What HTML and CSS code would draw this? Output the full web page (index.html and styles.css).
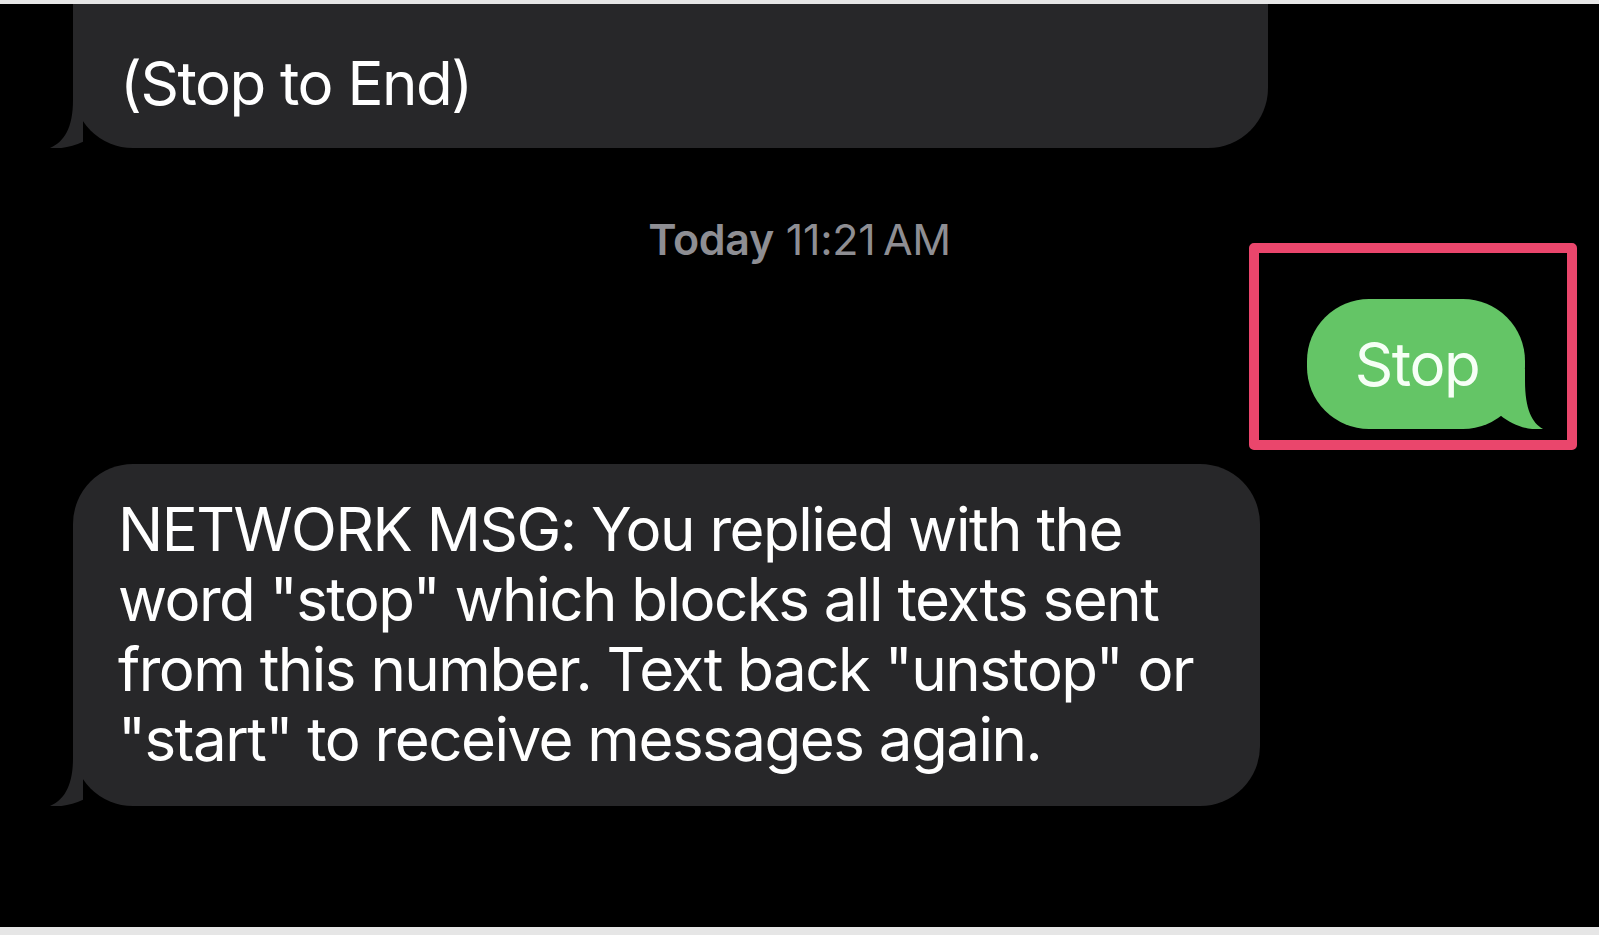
FILE: index.html
```html
<!DOCTYPE html>
<html lang="en">
<head>
<meta charset="utf-8">
<title>Messages</title>
<link rel="stylesheet" href="styles.css">
</head>
<body>
<div class="screen">
  <div class="bubble received clipped">
    <span class="line">(Stop to End)</span>
    <svg class="tail tail-left" width="40" height="60" viewBox="-30 -60 40 60" aria-hidden="true"><path d="M0,-48 C0,-20 -9,-6 -23,0 C-8,1.5 9,-3 22,-14 L22,-60 L0,-60 Z" fill="#272729"/></svg>
  </div>

  <div class="timestamp"><span class="day">Today</span> 11:21&#8201;AM</div>

  <div class="sent-row">
    <div class="bubble sent">
      <span class="line">Stop</span>
      <svg class="tail tail-right" width="50" height="60" viewBox="-30 -60 50 60" aria-hidden="true"><path d="M0,-48 C0,-20 7,-6 18,0 C4,1.5 -12,-3 -25,-14 L-25,-60 L0,-60 Z" fill="#64c566"/></svg>
      <div class="highlight"></div>
    </div>
  </div>

  <div class="bubble received large">
    <span class="line">NETWORK MSG: You replied with the</span><br>
    <span class="line">word "stop" which blocks all texts sent</span><br>
    <span class="line">from this number. Text back "unstop" or</span><br>
    <span class="line">"start" to receive messages again.</span>
    <svg class="tail tail-left" width="40" height="60" viewBox="-30 -60 40 60" aria-hidden="true"><path d="M0,-48 C0,-20 -9,-6 -23,0 C-8,1.5 9,-3 22,-14 L22,-60 L0,-60 Z" fill="#272729"/></svg>
  </div>
</div>
</body>
</html>
```

FILE: styles.css
```css
* { box-sizing: border-box; }

html, body {
  margin: 0;
  padding: 0;
  background: #e6e6e6;
}

body {
  padding-top: 4px;
  height: 935px;
  overflow: hidden;
  font-family: Inter, "Liberation Sans", sans-serif;
}

.screen {
  background: #000;
  height: 923px;
  display: flex;
  flex-direction: column;
  align-items: flex-start;
  overflow: hidden;
}

.bubble {
  position: relative;
  font-size: 60px;
  line-height: 70px;
  letter-spacing: -1.5px;
  color: #ffffff;
  white-space: nowrap;
}

.received {
  background: #272729;
  margin-left: 73px;
}

.clipped {
  width: 1195px;
  padding: 44px 0 30px 47px;
  border-radius: 0 0 60px 60px;
}

.large {
  width: 1187px;
  margin-top: 35px;
  padding: 30px 0 32px 45px;
  border-radius: 60px;
}

.tail {
  position: absolute;
  bottom: 0;
  display: block;
}

.tail-left {
  left: -30px;
}

.tail-right {
  right: -20px;
}

.timestamp {
  align-self: center;
  margin-top: 65px;
  font-size: 43px;
  line-height: 52px;
  letter-spacing: -0.3px;
  color: #8e8e93;
  font-weight: 400;
  padding-left: 0;
}

.timestamp .day {
  font-weight: 600;
}

.sent-row {
  align-self: stretch;
  display: flex;
  justify-content: flex-end;
  padding-right: 74px;
  margin-top: 34px;
}

.sent {
  background: #64c566;
  color: #f6fff6;
  border-radius: 62px;
  width: 218px;
  text-align: center;
  padding: 30px 0 30px 2px;
}

.highlight {
  position: absolute;
  top: -56px;
  left: -58px;
  right: -52px;
  bottom: -21px;
  border: 10px solid #ea466c;
  border-radius: 5px;
  pointer-events: none;
}
```
